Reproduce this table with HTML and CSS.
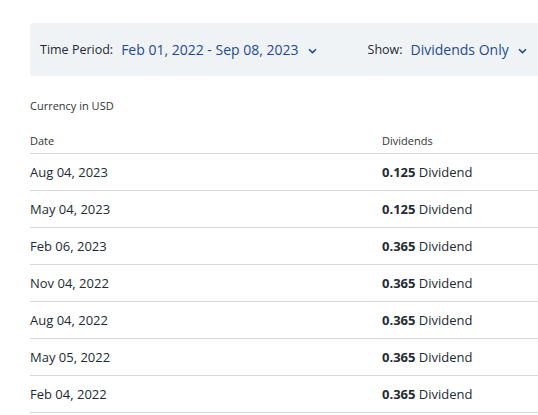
FILE: index.html
```html
<!DOCTYPE html>
<html>
<head>
<meta charset="utf-8">
<link rel="stylesheet" href="styles.css">
</head>
<body>
<div class="page">
  <div class="filters">
    <div class="filter">
      <span class="label">Time Period:</span>
      <span class="value">Feb 01, 2022 - Sep 08, 2023</span>
      <svg class="chev" width="9" height="6" viewBox="0 0 9 6"><path d="M1 1.2 L4.5 4.6 L8 1.2" fill="none" stroke="#1e4b8f" stroke-width="1.6"/></svg>
    </div>
    <div class="filter show">
      <span class="label">Show:</span>
      <span class="value">Dividends Only</span>
      <svg class="chev" width="9" height="6" viewBox="0 0 9 6"><path d="M1 1.2 L4.5 4.6 L8 1.2" fill="none" stroke="#1e4b8f" stroke-width="1.6"/></svg>
    </div>
  </div>
  <div class="currency">Currency in USD</div>
  <table class="hist">
    <thead>
      <tr><th class="c-date">Date</th><th class="c-div">Dividends</th></tr>
    </thead>
    <tbody>
      <tr><td>Aug 04, 2023</td><td><strong>0.125</strong> Dividend</td></tr>
      <tr><td>May 04, 2023</td><td><strong>0.125</strong> Dividend</td></tr>
      <tr><td>Feb 06, 2023</td><td><strong>0.365</strong> Dividend</td></tr>
      <tr><td>Nov 04, 2022</td><td><strong>0.365</strong> Dividend</td></tr>
      <tr><td>Aug 04, 2022</td><td><strong>0.365</strong> Dividend</td></tr>
      <tr><td>May 05, 2022</td><td><strong>0.365</strong> Dividend</td></tr>
      <tr><td>Feb 04, 2022</td><td><strong>0.365</strong> Dividend</td></tr>
    </tbody>
  </table>
</div>
</body>
</html>
```
FILE: styles.css
```css
html, body {
  margin: 0;
  padding: 0;
  background: #fff;
}
body {
  font-family: "Open Sans", "DejaVu Sans", sans-serif;
  color: #232a31;
  overflow: hidden;
}
.page {
  padding: 23px 0 0 30px;
}
.filters {
  display: flex;
  align-items: center;
  background: #f0f3f6;
  border-radius: 3px 0 0 3px;
  height: 53px;
  padding: 0 0 0 10px;
  box-sizing: border-box;
}
.filter {
  display: flex;
  align-items: center;
}
.filter.show {
  margin-left: 51px;
}
.label {
  font-size: 12.5px;
  color: #232a31;
  margin-right: 8px;
}
.value {
  font-size: 14px;
  color: #1e4b8f;
}
.chev {
  margin-left: 9px;
  margin-top: 3px;
}
.currency {
  font-size: 11px;
  color: #333;
  margin-top: 22px;
  height: 16px;
  line-height: 16px;
}
.hist {
  width: 508px;
  border-collapse: collapse;
  margin-top: 19px;
}
.hist th {
  font-size: 11px;
  font-weight: 400;
  color: #333;
  text-align: left;
  padding: 0 0 4px 0;
  line-height: 16px;
  border-bottom: 1px solid #d8d8d8;
}
.hist th.c-div, .hist td:last-child {
  width: 156px;
}
.hist td {
  font-size: 13px;
  height: 36px;
  padding: 0;
  border-bottom: 1px solid #d8d8d8;
  vertical-align: middle;
}
.hist td strong {
  font-weight: 700;
}
```
